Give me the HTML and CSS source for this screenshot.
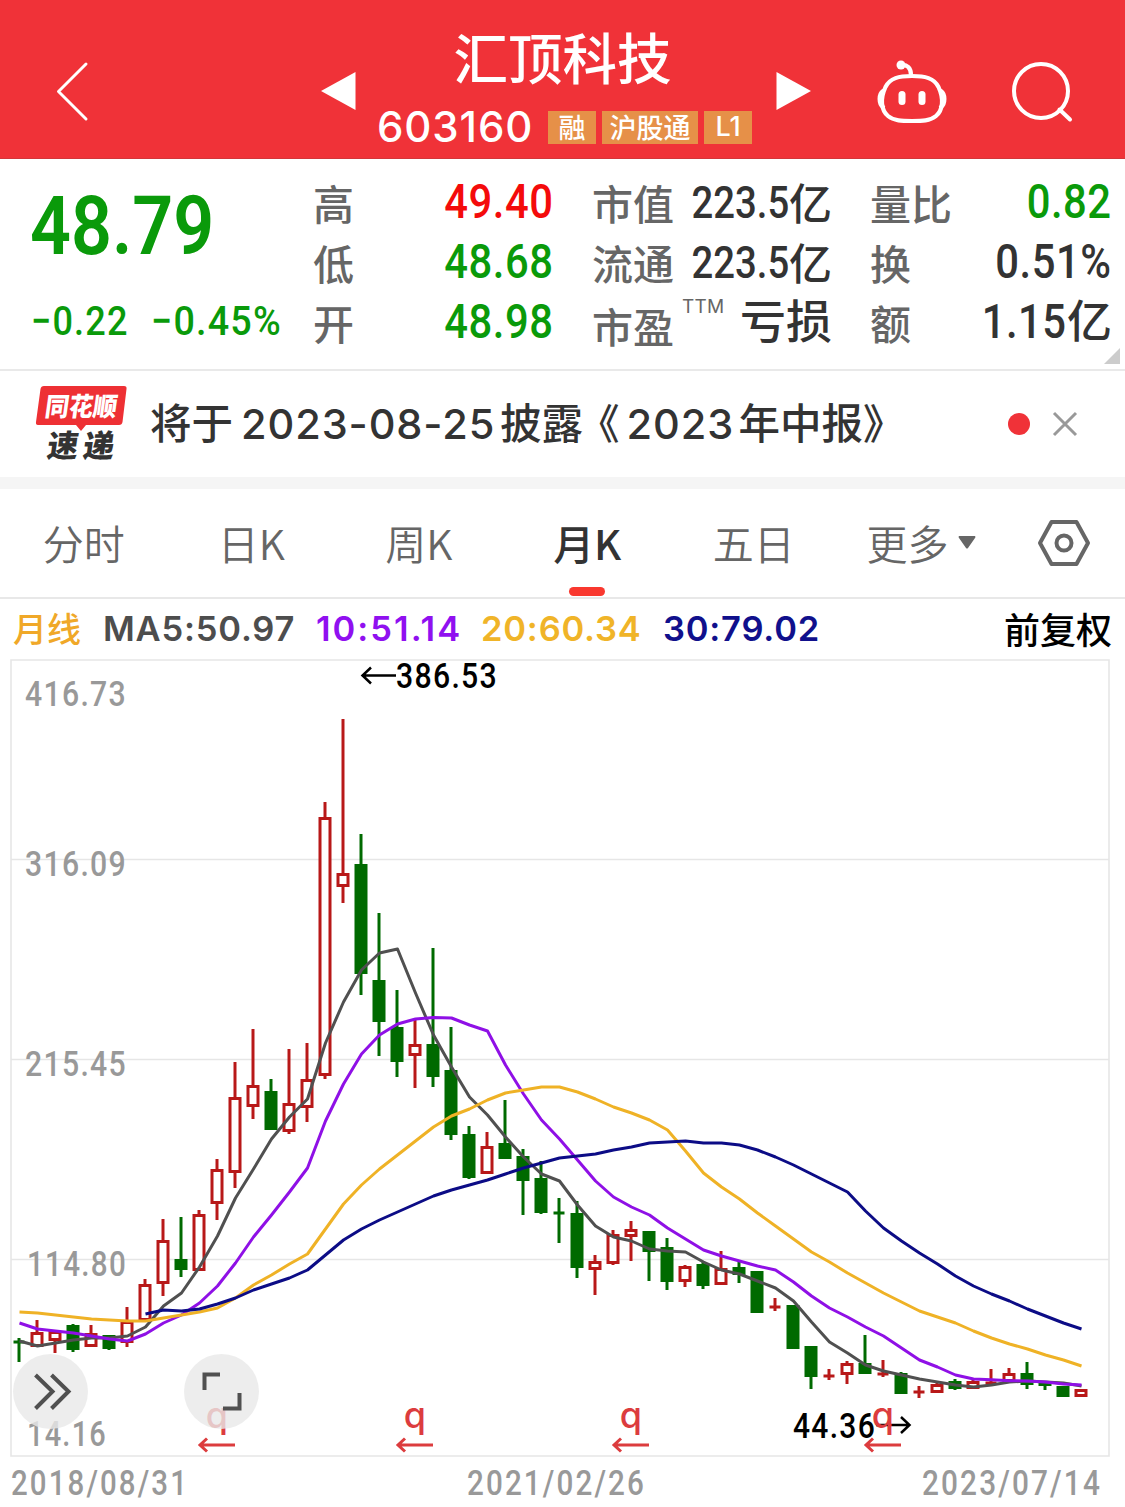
FILE: index.html
```html
<!DOCTYPE html>
<html lang="zh-CN">
<head>
<meta charset="utf-8">
<title>汇顶科技 603160</title>
<link rel="stylesheet" href="styles.css">
</head>
<body>
<header class="header">
  <svg class="icon back" width="34" height="62" viewBox="0 0 34 62"><path d="M31 4 3.500 31.500 31 59"/></svg>
  <svg class="prev" width="36" height="40" viewBox="0 0 36 40"><path d="M1 20 35.500 1v38z"/></svg>
  <div class="stock">
    <h1 class="name">汇顶科技</h1>
    <div class="meta"><span class="code">603160</span><span class="badge">融</span><span class="badge badge-wide">沪股通</span><span class="badge badge-latin">L1</span></div>
  </div>
  <svg class="next" width="36" height="40" viewBox="0 0 36 40"><path d="M35 20 .5 1v38z"/></svg>
  <svg class="icon robot" width="72" height="66" viewBox="876 59 72 66">
    <path d="M912 76C925 76 934 78 938.500 87C944 99 943 110 936 116C930 121 922 121 912 121S894 121 888 116C881 110 880 99 885.500 87C890 78 899 76 912 76Z"/>
    <path d="M883 91C878.500 94 878.500 104 883 107M941 91C945.500 94 945.500 104 941 107M901 65C907 64 911 68 911 75"/>
    <circle class="solid" cx="901" cy="65" r="4.500"/>
    <rect class="solid" x="898.500" y="91" width="7" height="14" rx="3.500"/><rect class="solid" x="918.500" y="91" width="7" height="14" rx="3.500"/>
  </svg>
  <svg class="icon search" width="64" height="64" viewBox="1010 59 64 64"><circle cx="1040" cy="90" r="27"/><path d="M1058.500 108.500 1069 118.500"/></svg>
</header>

<section class="quote">
  <div class="price">
    <div class="last"><span>48.79</span></div>
    <div class="change"><span class="abs">−0.22</span><span class="pct">−0.45%</span></div>
  </div>
  <dl class="facts facts-a">
    <div><dt>高</dt><dd class="num up">49.40</dd></div>
    <div><dt>低</dt><dd class="num down">48.68</dd></div>
    <div><dt>开</dt><dd class="num down">48.98</dd></div>
  </dl>
  <dl class="facts facts-b">
    <div><dt>市值</dt><dd><span class="num small">223.5</span><span class="unit">亿</span></dd></div>
    <div><dt>流通</dt><dd><span class="num small">223.5</span><span class="unit">亿</span></dd></div>
    <div><dt class="low">市盈<sup>TTM</sup></dt><dd class="loss">亏损</dd></div>
  </dl>
  <dl class="facts facts-c">
    <div><dt>量比</dt><dd class="num down">0.82</dd></div>
    <div><dt>换</dt><dd class="num">0.51%</dd></div>
    <div><dt>额</dt><dd><span class="num">1.15</span><span class="unit big">亿</span></dd></div>
  </dl>
  <i class="corner"></i>
</section>

<section class="news">
  <svg class="logo" width="94" height="80" viewBox="35 383 94 80">
    <path fill="#ee3034" d="M44 385H124Q127 385 126.500 388L122.500 421Q122 424 119 424H86L81 430 76 424H38Q35.500 424 36 421L40.500 388Q41 385 44 385Z"/>
    <text class="logo-top" transform="translate(44 415) skewX(-8)" textLength="72" lengthAdjust="spacingAndGlyphs">同花顺</text>
    <text class="logo-bottom" transform="translate(46 456) skewX(-8)">速</text>
    <text class="logo-bottom" transform="translate(82 456) skewX(-8)">递</text>
  </svg>
  <p class="headline">将于<span class="date">2023-08-25</span>披露<span class="open">《</span><span class="year">2023</span>年中报》</p>
  <i class="dot"></i>
  <svg class="close" width="26" height="26" viewBox="0 0 26 26"><path d="M2 2 24 24M24 2 2 24"/></svg>
</section>

<nav class="tabs">
  <a>分时</a><a>日K</a><a>周K</a><a class="active">月K</a><a>五日</a>
  <a class="more">更多<svg width="18" height="13" viewBox="0 0 18 13"><path d="M1 0H17Q18 1 17 2L10 12Q9 13 8 12L1 2Q0 1 1 0Z"/></svg></a>
  <svg class="gear" width="54" height="50" viewBox="0 0 54 50"><path d="M14.500 4H39.500L51 25 39.500 46H14.500L3 25Z"/><circle cx="27" cy="25" r="7.500"/></svg>
</nav>

<div class="legend"><b class="period">月线</b><span class="ma5">MA5:50.97</span><span class="ma10">10:51.14</span><span class="ma20">20:60.34</span><span class="ma30">30:79.02</span><b class="adjust">前复权</b></div>

<svg class="chart" width="1125" height="848" viewBox="0 659 1125 848">
  <g class="grid"><path d="M11 660H1109V1456H11ZM11 859.500H1109M11 1059.500H1109M11 1259.500H1109"/></g>
  <g class="axis">
    <text x="25" y="706" textLength="102" lengthAdjust="spacingAndGlyphs">416.73</text>
    <text x="25" y="876" textLength="102" lengthAdjust="spacingAndGlyphs">316.09</text>
    <text x="25" y="1076" textLength="102" lengthAdjust="spacingAndGlyphs">215.45</text>
    <text x="27" y="1276" textLength="100" lengthAdjust="spacingAndGlyphs">114.80</text>
    <text x="27" y="1446" textLength="80" lengthAdjust="spacingAndGlyphs">14.16</text>
    <text class="day" x="11" y="1495" textLength="178" lengthAdjust="spacingAndGlyphs">2018/08/31</text>
    <text class="day" x="467" y="1495" textLength="179" lengthAdjust="spacingAndGlyphs">2021/02/26</text>
    <text class="day" x="922" y="1495" textLength="180" lengthAdjust="spacingAndGlyphs">2023/07/14</text>
  </g>
  <g id="candles"></g>
  <g id="averages"></g>
  <g class="extreme">
    <text x="396" y="688" textLength="102" lengthAdjust="spacingAndGlyphs">386.53</text><path d="M396 675.500H363M371 667.500 362.500 675.500 371 683.500"/>
    <text x="793" y="1438" textLength="83" lengthAdjust="spacingAndGlyphs">44.36</text><path d="M876 1425H909M901 1417 909.500 1425 901 1433"/>
  </g>
  <g class="events">
    <text x="217" y="1428">q</text><path d="M235 1445H201M207 1438.500 200 1445 207 1451.500"/>
    <text x="415" y="1428">q</text><path d="M433 1445H399M405 1438.500 398 1445 405 1451.500"/>
    <text x="631" y="1428">q</text><path d="M649 1445H615M621 1438.500 614 1445 621 1451.500"/>
    <text x="883" y="1428">q</text><path d="M901 1445H867M873 1438.500 866 1445 873 1451.500"/>
  </g>
  <g class="controls">
    <circle cx="50.500" cy="1391.500" r="37.500"/><circle cx="221.500" cy="1391.500" r="37.500"/>
    <path d="M35.500 1375 52.500 1391.500 35.500 1408.500M51.500 1375 68.500 1391.500 51.500 1408.500M204.500 1390V1374.500H220M239.500 1393V1408.500H223"/>
  </g>
</svg>
<script src="chart.js"></script>
</body>
</html>
```
FILE: styles.css
```css
* { box-sizing: border-box; }
body { margin: 0; width: 1125px; height: 1507px; overflow: hidden; background: #fff; color: #333; font-family: "Noto Sans CJK SC", sans-serif; }
svg { display: block; flex: none; }
h1, p, dl, dd { margin: 0; }

.header { height: 159px; background: #f03238; border-bottom: 1px solid #d3363a; color: #fff; display: flex; align-items: flex-start; }
.icon { fill: none; stroke: #fff; stroke-width: 4.2; stroke-linecap: round; stroke-linejoin: round; }
.solid { fill: #fff; stroke: none; }
.back { margin: 60px 0 0 55px; stroke-width: 3; }
.prev, .next { fill: #fff; margin-top: 71px; }
.prev { margin-left: 231px; }
.stock { width: 420px; padding-top: 24px; }
.name { font-size: 54.500px; line-height: 64px; font-weight: 500; text-align: center; white-space: nowrap; padding-right: 7px; }
.meta { display: flex; height: 33px; margin: 23px 0 0 21px; }
.code { font: 500 42px/32px Inter, sans-serif; width: 171px; letter-spacing: .9px; white-space: nowrap; }
.badge { width: 48px; height: 33px; margin-right: 6px; background: #e69048; font-size: 27px; line-height: 31px; text-align: center; font-weight: 500; white-space: nowrap; flex: none; }
.badge-wide { width: 96px; }
.badge-latin { margin-right: 0; font-family: Inter, sans-serif; line-height: 32px; }
.robot { margin: 59px 0 0 64px; }
.search { margin: 60px 0 0 63px; stroke-width: 4; }

.quote { position: relative; height: 212px; border-bottom: 2px solid #e9e9e9; display: flex; padding-top: 13px; }
.price { width: 313px; color: #0a9a0a; font-family: Roboto, sans-serif; padding: 2px 0 0 30px; }
.last { height: 104px; font-size: 82px; font-weight: 600; line-height: 104px; }
.last span { display: inline-block; transform: scaleX(.875); transform-origin: left; }
.change { display: flex; font-size: 41px; line-height: 86px; font-weight: 500; }
.change span { transform: scaleX(.88); transform-origin: left; white-space: nowrap; letter-spacing: 1.3px; }
.change .pct { transform: scaleX(.92); }
.abs { width: 120px; margin-left: 1px; }
.facts > div { height: 60px; display: flex; justify-content: space-between; align-items: center; line-height: 60px; white-space: nowrap; }
.facts dt { font-size: 41px; color: #666; font-weight: 500; margin-top: -1px; }
.facts dd { display: flex; }
.facts-a { width: 240px; margin-right: 39px; }
.facts-b { width: 240px; margin-right: 38px; }
.facts-c { width: 242px; }
.facts .num { font-family: Roboto, sans-serif; font-size: 48px; font-weight: 500; transform: scaleX(.87); transform-origin: right; letter-spacing: .6px; }
.facts .small { font-size: 44px; letter-spacing: 0; margin-top: 1px; }
.unit { font-size: 43px; font-weight: 500; margin-top: -1px; }
.big { font-size: 45px; margin-top: -3px; }
.facts .up { color: #f40b0b; }
.facts .down { color: #0a9a0a; }
.facts .low { padding-top: 6px; }
.low sup { display: inline-block; font-size: 19px; letter-spacing: .2px; line-height: 20px; vertical-align: 0; position: relative; top: -30px; margin-left: 8px; font-family: Inter, sans-serif; font-weight: 400; }
.low { line-height: 54px; }
.facts .loss { font-size: 46px; font-weight: 500; margin-top: -8px; }
.corner { position: absolute; right: 5px; bottom: 5px; border-left: 16px solid transparent; border-bottom: 16px solid #ccc; }

.news { height: 118px; border-bottom: 12px solid #f5f5f5; display: flex; align-items: center; padding-left: 35px; }
.logo { overflow: visible; }
.logo-top { font-size: 26px; font-weight: 900; fill: #fff; }
.logo-bottom { font-size: 31px; font-weight: 900; fill: #333; }
.headline { width: 857px; margin: -4px 0 0 21px; font-size: 41.500px; line-height: 60px; font-weight: 500; white-space: nowrap; }
.date, .year { font-family: Inter, sans-serif; display: inline-block; font-weight: 500; letter-spacing: .9px; margin-left: 8px; }
.date { width: 259px; }
.open { margin-left: -5px; }
.year { width: 112px; margin-left: 7px; }
.dot { width: 22px; height: 22px; margin-left: 1px; background: #f03238; border-radius: 50%; flex: none; }
.close { margin-left: 22px; stroke: #999; stroke-width: 3; fill: none; }

.tabs { height: 110px; border-bottom: 2px solid #e8e8e8; display: flex; font-size: 41px; line-height: 106px; color: #666; font-weight: 350; }
.tabs a { width: 167.500px; text-align: center; position: relative; white-space: nowrap; }
.tabs .active { color: #333; font-weight: 500; left: 1px; }
.active::after { content: ""; position: absolute; left: 65px; bottom: 1px; width: 36px; height: 9px; border-radius: 5px; background: #f9382f; }
.tabs .more { display: flex; align-items: center; padding-left: 29px; width: 200px; gap: 9px; fill: #666; height: 106px; }
.gear { margin: 29px 0 0 -1px; fill: none; stroke: #666; stroke-width: 4; stroke-linejoin: round; }

.legend { height: 60px; display: flex; align-items: center; padding-left: 13px; font: 600 34.500px/60px Inter, sans-serif; white-space: nowrap; letter-spacing: .8px; }
.legend b { font-family: "Noto Sans CJK SC", sans-serif; font-weight: 500; letter-spacing: 0; margin-top: -2px; }
.period { width: 90px; font-size: 34px; color: #f0a828; }
.ma5 { width: 213px; color: #4d4d4d; }
.ma10 { width: 165px; color: #9010f0; letter-spacing: 2px; }
.ma20 { width: 182px; color: #f0b428; }
.ma30 { width: 341px; color: #10108c; }
.adjust { font-size: 36px; color: #000; }

.chart text { font-family: Roboto, sans-serif; font-size: 35px; letter-spacing: 1.5px; }
.grid path { fill: none; stroke: #e6e6e6; stroke-width: 1.600; }
.axis text { fill: #999; font-weight: 500; }
.axis .day { letter-spacing: 2.5px; }
.extreme { fill: #000; font-weight: 500; }
.extreme path { fill: none; stroke: #000; stroke-width: 2.500; }
.events { fill: #dc3c3e; }
.chart .events text { font-family: Inter, sans-serif; font-size: 36px; font-weight: 500; text-anchor: middle; letter-spacing: 0; }
.events path { fill: none; stroke: #dc3c3e; stroke-width: 3; }
.controls circle { fill: rgba(232, 232, 232, .8); }
.controls path { fill: none; stroke: #505050; stroke-width: 4; }
.candle-up { fill: #fff; stroke: #b81818; stroke-width: 3; }
.candle-down { fill: #006a00; stroke: #006a00; stroke-width: 3; }
.average { fill: none; stroke-width: 3; stroke-linejoin: round; }
```
FILE: chart.js
```js
// One row per month: direction, high, body top, body bottom, low (vertical chart units).
const months = [
  ['d',1338,1342,1342,1362],['u',1320,1332,1347,1347],['u',1331,1331,1341,1353],['d',1324,1325,1350,1352],
  ['u',1325,1333,1347,1347],['d',1335,1335,1349,1350],['u',1307,1321,1343,1347],['u',1279,1284,1321,1321],
  ['u',1219,1240,1284,1296],['d',1217,1259,1270,1277],['u',1210,1214,1271,1271],['u',1159,1169,1204,1220],
  ['u',1062,1097,1173,1188],['u',1029,1085,1107,1119],['d',1079,1091,1130,1130],['u',1049,1103,1132,1134],
  ['u',1043,1079,1108,1122],['u',802,817,1076,1079],['u',719,873,887,903],['d',834,864,974,995],
  ['d',913,980,1022,1056],['d',990,1027,1062,1077],['u',1019,1044,1056,1088],['d',948,1044,1077,1087],
  ['d',1027,1070,1135,1140],['d',1126,1134,1178,1179],['u',1132,1146,1174,1174],['d',1100,1143,1159,1159],
  ['d',1149,1156,1181,1215],['d',1161,1178,1213,1214],['d',1198,1213,1213,1243],['d',1201,1213,1268,1278],
  ['u',1255,1261,1270,1295],['u',1230,1234,1264,1265],['u',1221,1229,1237,1261],['d',1231,1231,1252,1281],
  ['d',1238,1247,1282,1290],['u',1265,1266,1282,1287],['d',1262,1264,1286,1289],['u',1251,1268,1285,1285],
  ['d',1262,1267,1275,1283],['d',1271,1271,1313,1313],['u',1298,1307,1307,1311],['d',1305,1305,1349,1349],
  ['d',1346,1346,1377,1389],['u',1369,1376,1376,1380],['u',1361,1363,1375,1384],['d',1335,1363,1374,1374],
  ['u',1360,1374,1374,1377],['d',1372,1373,1394,1394],['u',1386,1392,1392,1398],['u',1381,1384,1393,1393],
  ['d',1379,1381,1389,1390],['u',1379,1381,1389,1389],['u',1369,1383,1383,1384],['u',1368,1373,1382,1382],
  ['d',1362,1373,1385,1389],['d',1382,1382,1386,1390],['d',1386,1386,1397,1397],['u',1389,1389,1397,1397]
];

const averages = [
  { color: '#505050', start: 0, y: [1341,1346,1343,1340,1338,1338,1336,1327,1306,1293,1267,1236,1198,1169,1139,1117,1099,1043,1002,970,953,949,993,1035,1067,1097,1115,1137,1157,1174,1181,1205,1226,1237,1241,1249,1251,1252,1262,1270,1274,1281,1288,1301,1322,1342,1353,1365,1371,1375,1379,1382,1385,1387,1385,1382,1381,1382,1383,1386] },
  { color: '#8f10e6', start: 0, y: [1323,1329,1331,1333,1336,1339,1341,1334,1323,1315,1303,1286,1263,1237,1215,1192,1168,1121,1084,1054,1035,1024,1019,1017.5,1018,1025,1031,1065,1094,1120,1139,1160,1181,1197,1207,1215,1228,1239,1250,1256,1261,1266,1270,1282,1296,1308,1317,1327,1336,1348,1360,1367,1375,1379,1379.7,1380.7,1381,1382,1384,1385] },
  { color: '#efb226', start: 0, y: [1312,1313,1315,1317,1319,1320,1321,1321,1318,1315,1312,1308,1298,1285,1275,1264,1254,1229,1204,1185,1169,1155,1141,1127,1116,1109,1100,1093,1090,1087,1087,1092,1099,1107,1113,1120,1130,1151,1173,1187,1199,1213,1226,1239,1252,1262,1273,1283,1293,1302,1311,1317,1323,1331,1338,1344,1349,1355,1360,1366] },
  { color: '#0c0c86', start: 7, y: [1314,1310,1311,1309,1304,1298,1290,1284,1278,1270,1255,1240,1229,1220,1212,1204,1196,1190,1185,1180,1174,1168,1163,1158,1156,1154,1150,1147,1143,1142,1141,1143,1143,1145,1150,1157,1165,1174,1183,1192,1211,1228,1241,1253,1264,1276,1286,1294,1301,1309,1316,1323,1329] }
];

const centre = i => 19 + 18 * i;

document.getElementById('candles').innerHTML = months.map(([dir, high, top, bottom, low], i) => {
  const x = centre(i);
  const cls = dir === 'u' ? 'candle-up' : 'candle-down';
  const wick = `<path class="${cls}" d="M${x} ${high}V${low}"/>`;
  const body = bottom === top
    ? `<path class="${cls}" d="M${x - 5.5} ${top}H${x + 5.5}"/>`
    : `<rect class="${cls}" x="${x - 5}" y="${top + 1.5}" width="10" height="${Math.max(bottom - top - 3, 1)}"/>`;
  return wick + body;
}).join('');

document.getElementById('averages').innerHTML = averages.map(line =>
  `<polyline class="average" stroke="${line.color}" points="${line.y.map((y, i) => `${centre(i + line.start) + 0.5},${y}`).join(' ')}"/>`
).join('');
```
